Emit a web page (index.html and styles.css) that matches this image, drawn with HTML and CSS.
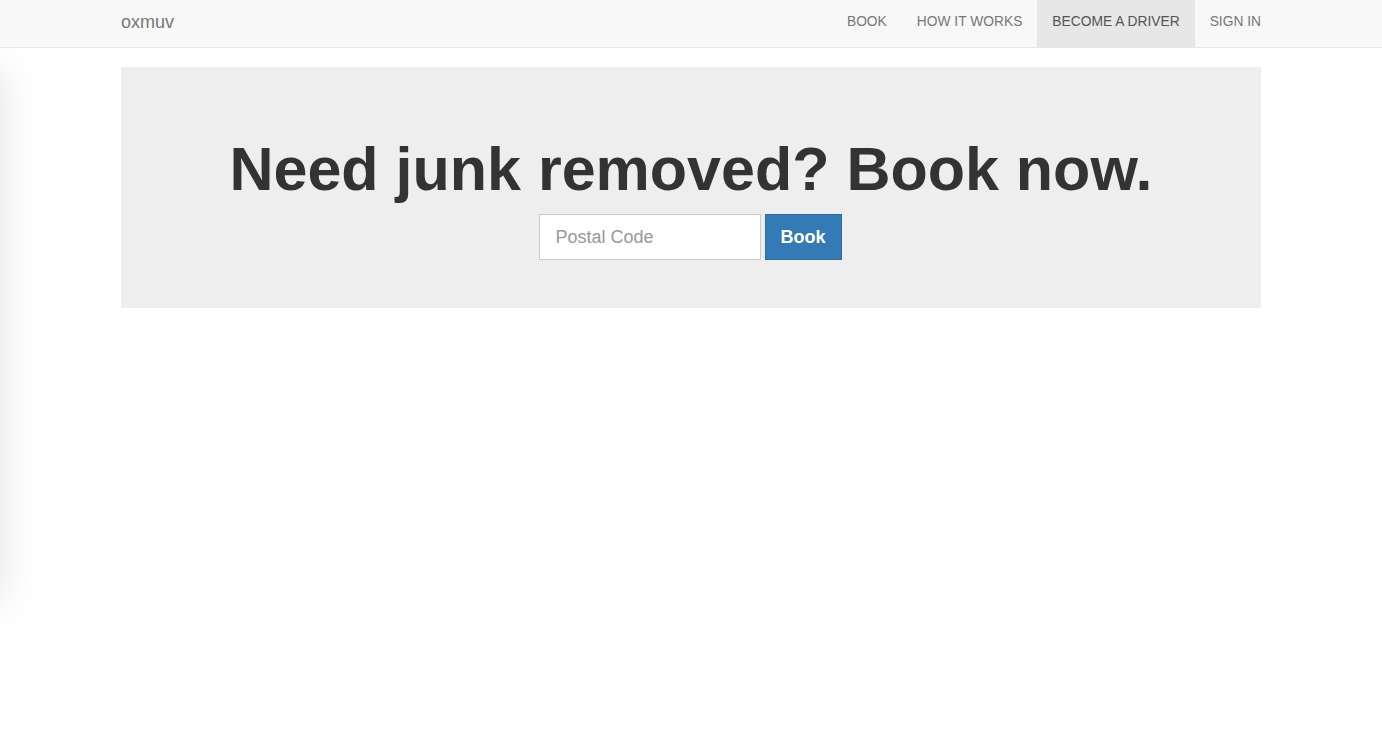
FILE: index.html
```html
<!DOCTYPE html>
<html>
<head>
<meta charset="utf-8">
<title>oxmuv</title>
<link rel="stylesheet" href="styles.css">
</head>
<body>
<div class="offcanvas"></div>
<nav class="navbar">
  <div class="container nav-inner">
    <a class="brand" href="#">oxmuv</a>
    <ul class="nav">
      <li><a href="#">BOOK</a></li>
      <li><a href="#">HOW IT WORKS</a></li>
      <li class="active"><a href="#">BECOME A DRIVER</a></li>
      <li><a href="#">SIGN IN</a></li>
    </ul>
  </div>
</nav>
<div class="container">
  <div class="jumbotron">
    <h1>Need junk removed? Book now.</h1>
    <form class="book-form">
      <input class="postal" type="text" placeholder="Postal Code">
      <button class="btn" type="button">Book</button>
    </form>
  </div>
</div>
</body>
</html>
```
FILE: styles.css
```css
* { box-sizing: border-box; }
html, body { margin: 0; padding: 0; }
body {
  font-family: "Liberation Sans", Arial, sans-serif;
  font-size: 14px;
  line-height: 1.42857;
  color: #333;
  background: #fff;
  overflow: hidden;
}
.offcanvas {
  position: fixed;
  left: -300px;
  top: 70px;
  width: 300px;
  height: 530px;
  background: #fff;
  box-shadow: 0 0 40px rgba(0,0,0,0.12);
}
.container {
  width: 1170px;
  margin: 0 auto;
  padding: 0 15px;
}
.navbar {
  background: #f8f8f8;
  border-bottom: 1px solid #e7e7e7;
  margin-bottom: 19px;
  position: relative;
}
.nav-inner {
  display: flex;
  justify-content: space-between;
  align-items: stretch;
  height: 47px;
}
.brand {
  color: #777;
  font-size: 18px;
  line-height: 20px;
  text-decoration: none;
  padding: 12px 0 15px;
}
.nav {
  list-style: none;
  margin: 0 -15px 0 0;
  padding: 0;
  display: flex;
}
.nav li a {
  display: block;
  padding: 13px 15px 16px;
  font-size: 13.8px;
  line-height: 18px;
  color: #777;
  text-decoration: none;
}
.nav li.active a {
  background: #e7e7e7;
  color: #555;
}
.jumbotron {
  background: #eee;
  padding: 48px 60px;
  text-align: center;
}
.jumbotron h1 {
  margin: 20px 0 10px;
  font-size: 61px;
  line-height: 69px;
  font-weight: 700;
  color: #333;
}
.book-form {
  display: flex;
  justify-content: center;
  gap: 4px;
  margin: 0;
  padding-right: 2px;
}
.postal {
  width: 222px;
  height: 46px;
  padding: 10px 16px;
  font-family: inherit;
  font-size: 18px;
  color: #555;
  background: #fff;
  border: 1px solid #ccc;
  border-radius: 0;
  outline: none;
}
.postal::placeholder { color: #999; }
.btn {
  width: 77px;
  height: 46px;
  padding: 10px 0;
  font-family: inherit;
  font-size: 18px;
  font-weight: 700;
  color: #fff;
  background: #337ab7;
  border: 1px solid #2e6da4;
  border-radius: 0;
}
```
